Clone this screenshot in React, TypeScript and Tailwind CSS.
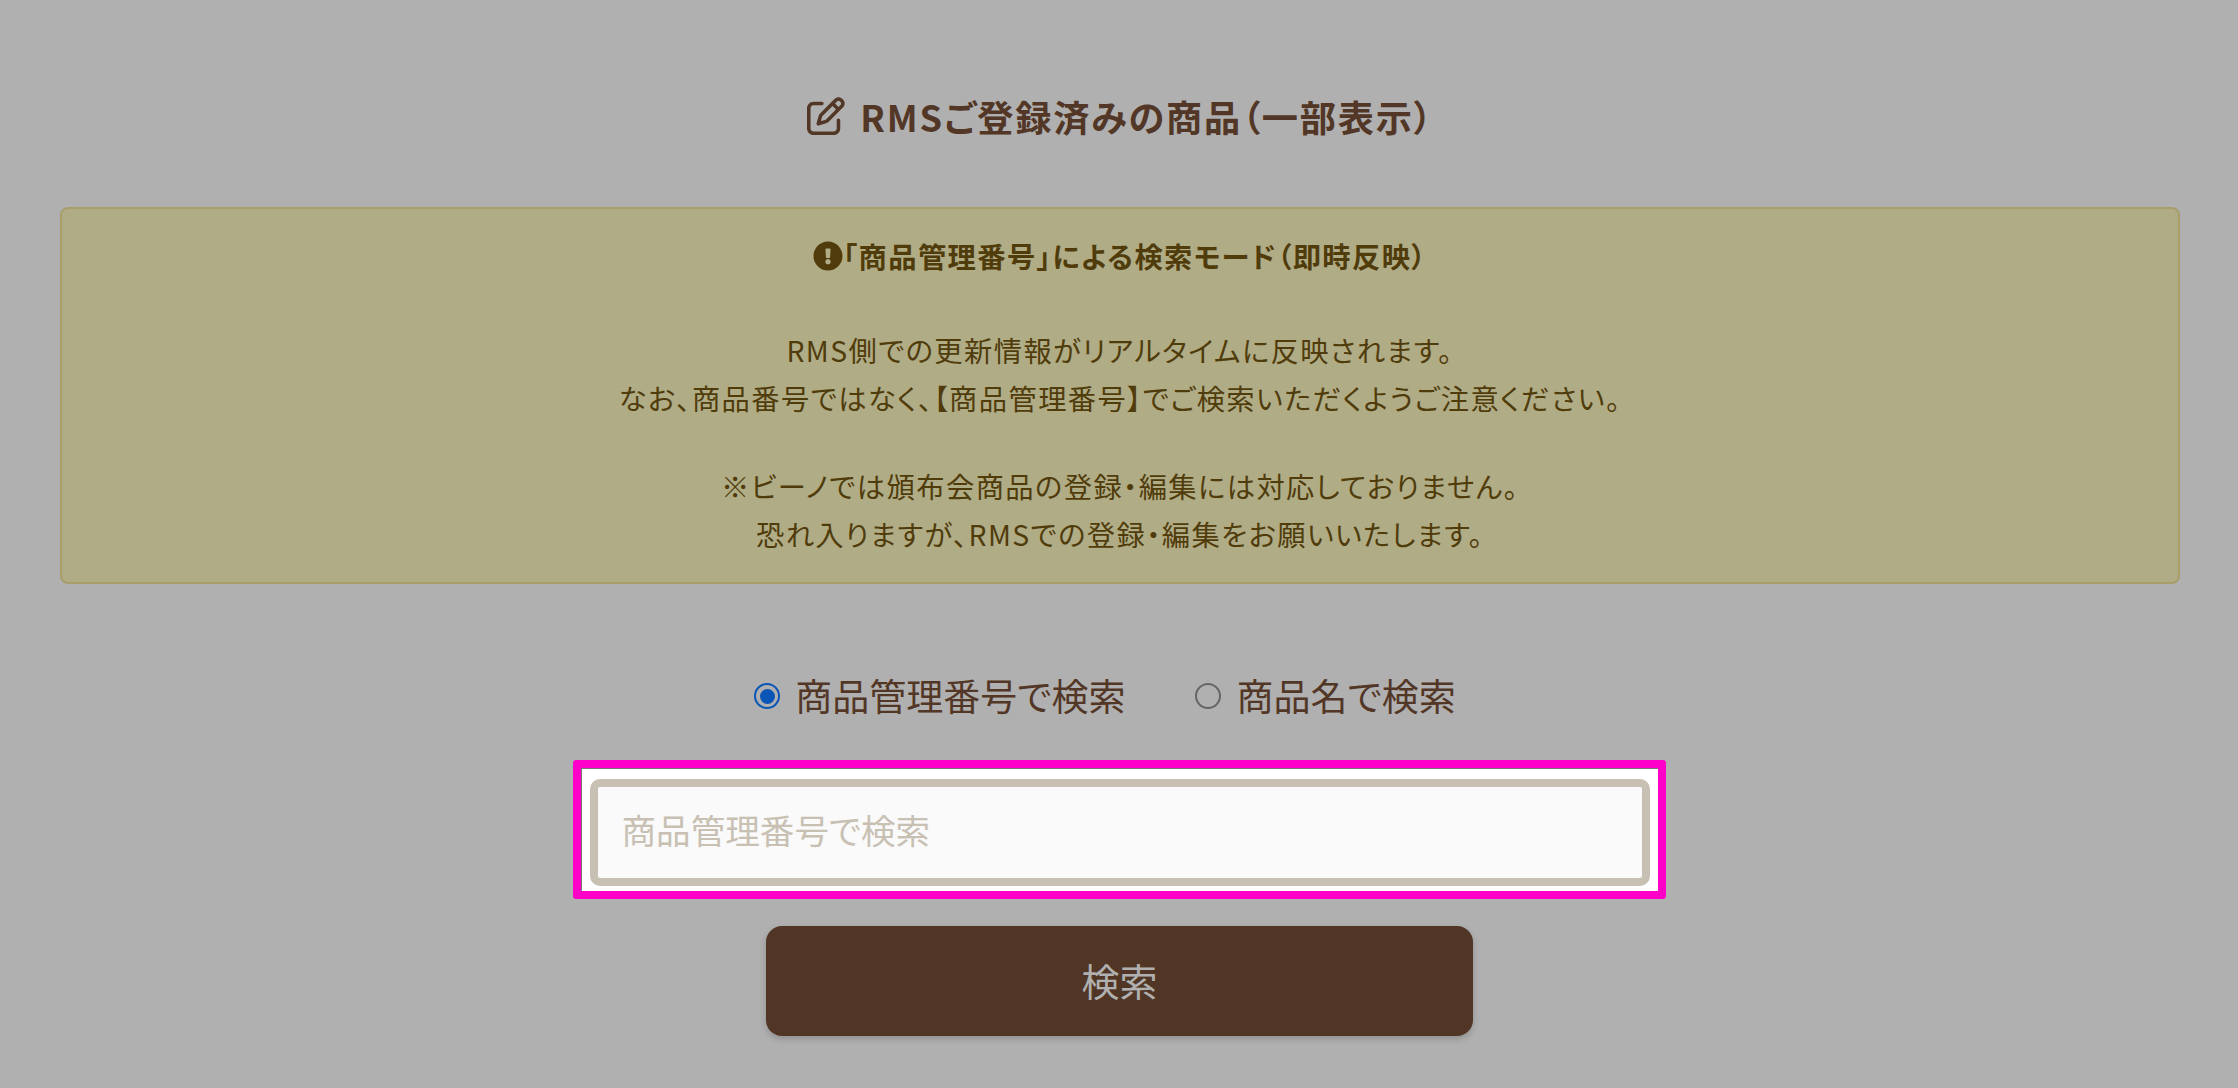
import { FaRegPenToSquare } from "react-icons/fa6";
import { FaExclamationCircle } from "react-icons/fa";

const font = "font-['Noto_Sans_CJK_JP','Noto_Sans',sans-serif] [font-feature-settings:'palt']";

function Radio({ checked, label }: { checked?: boolean; label: string }) {
  return (
    <label className="flex items-center gap-[15px]">
      {checked ? (
        <span className="w-[26px] h-[26px] rounded-full border-2 border-[#0a55b5] p-[3.5px]">
          <span className="block w-full h-full rounded-full bg-[#0a55b5]" />
        </span>
      ) : (
        <span className="w-[26px] h-[26px] rounded-full border-2 border-[#666666]" />
      )}
      <span className="-mt-[2px]">{label}</span>
    </label>
  );
}

export default function App() {
  return (
    <div className={`${font} w-full h-[1088px] overflow-hidden bg-[#b0b0b0] text-[#533726] flex flex-col items-center px-[60px]`}>
      <h1 className="mt-[91px] ml-[3px] flex items-center gap-[15px] text-[36.2px] leading-[50px] font-bold tracking-[1.8px]">
        <FaRegPenToSquare size={38} />
        <span>RMSご登録済みの商品（一部表示）</span>
      </h1>
      <div className="mt-[66px] self-start w-[2120px] h-[377px] rounded-[8px] border-2 border-[#a89e6a] bg-[#b0ac86] text-[#503c0b] text-[28.3px] leading-[48px] tracking-[1.4px] text-center flex flex-col pt-[23px]">
        <p className="font-bold flex items-center justify-center">
          <FaExclamationCircle size={30} />
          <span>「商品管理番号」による検索モード（即時反映）</span>
        </p>
        <p className="mt-[46px]">RMS側での更新情報がリアルタイムに反映されます。</p>
        <p>なお、商品番号ではなく、【商品管理番号】でご検索いただくようご注意ください。</p>
        <p className="mt-[40px]">※ビーノでは頒布会商品の登録・編集には対応しておりません。</p>
        <p>恐れ入りますが、RMSでの登録・編集をお願いいたします。</p>
      </div>
      <div className="mt-[87px] mr-[28px] flex items-center gap-[70px] text-[37px] leading-[52px]">
        <Radio checked label="商品管理番号で検索" />
        <Radio label="商品名で検索" />
      </div>
      <div className="mt-[39px] ml-[1px] w-[1093px] h-[139px] border-[8px] border-[#ff00c8] rounded-[3px] bg-white shadow-[inset_1px_1px_0_#777777] pt-[6px] flex items-center justify-center">
        <input
          readOnly
          placeholder="商品管理番号で検索"
          className="w-[1060px] h-[107px] border-[8px] border-[#c8c1b3] rounded-[10px] bg-[#fafafa] px-[24px] pb-[8px] text-[34.6px] outline-none placeholder:text-[#c8c1b3]"
        />
      </div>
      <button className="mt-[27px] ml-[1px] w-[707px] h-[110px] pb-[3px] rounded-[16px] bg-[#513626] text-[#b0b0b0] text-[38px] shadow-[0_3px_6px_rgba(0,0,0,0.18)]">
        検索
      </button>
    </div>
  );
}
